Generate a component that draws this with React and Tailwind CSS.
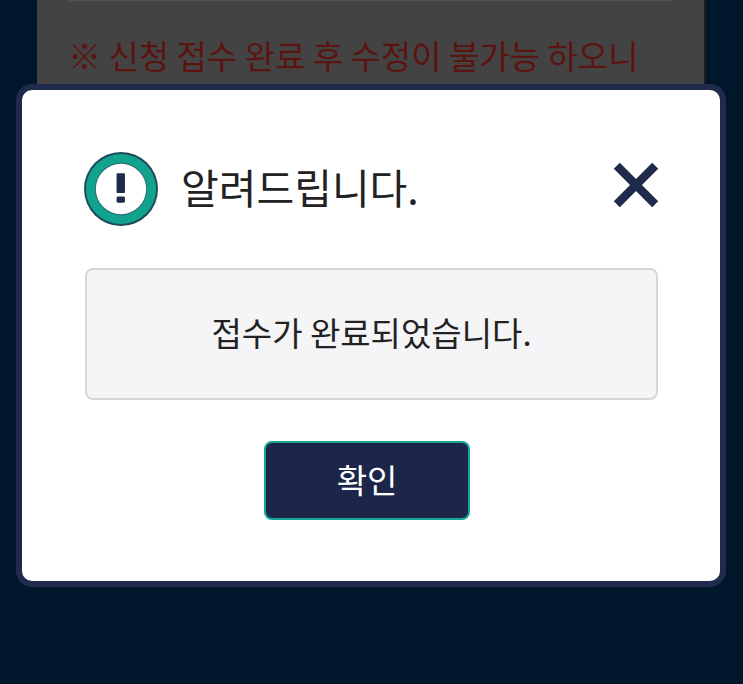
export default function App() {
  return (
    <div className="relative w-[743px] h-[684px] overflow-hidden bg-[#00162b] font-['Noto_Sans_CJK_KR','Noto_Sans',sans-serif]">
      {/* Dimmed page behind the dialog */}
      <div className="mx-[37px] w-[669px] h-[96px] bg-[#434343] border-r-2 border-r-[#1c1c1c] pl-[32px] pr-[31px]">
        <div className="h-[1px] bg-[#555555]" />
        <p className="mt-[32px] -ml-[1px] text-[33px] leading-[44px] whitespace-nowrap text-[#5c1410]">
          ※ 신청 접수 완료 후 수정이 불가능 하오니
        </p>
      </div>

      {/* Dialog */}
      <div className="absolute left-[16px] top-[84px] w-[710px] h-[503px] bg-white border-[6px] border-[#1f2a4d] rounded-[16px] pl-[63px] pr-[62px]">
        <div className="flex items-center mt-[62px] h-[75px]">
          <svg width="74" height="74" viewBox="0 0 75 75" className="shrink-0 -ml-[1px] mb-[1px]">
            <circle cx="37.5" cy="37.5" r="37.5" fill="#1f4a5a" />
            <circle cx="37.5" cy="37.5" r="35.5" fill="#12a38f" />
            <circle cx="37.5" cy="37.5" r="26.5" fill="#2a6a70" />
            <circle cx="37.5" cy="37.5" r="25.5" fill="#ffffff" />
            <rect x="33" y="21.5" width="8.5" height="20" rx="1" fill="#1f2a4d" />
            <rect x="33" y="45" width="8.5" height="6.5" rx="1.5" fill="#1f2a4d" />
          </svg>
          <h2 className="ml-[23px] mb-[8px] text-[41px] leading-[50px] font-normal text-[#222222]">알려드립니다.</h2>
          <button className="ml-auto mr-[-1px] mb-[9px]">
            <svg width="46" height="46" viewBox="0 0 46 46" className="block">
              <path d="M3.8 3.8 L42.2 42.2 M42.2 3.8 L3.8 42.2" stroke="#1f2a4d" strokeWidth="8.5" />
            </svg>
          </button>
        </div>

        <div className="mt-[41px] h-[132px] flex items-center justify-center bg-[#f5f5f7] border-2 border-[#d6d6d8] rounded-[8px]">
          <p className="pb-[5px] text-[33px] leading-[40px] text-[#222222]">접수가 완료되었습니다.</p>
        </div>

        <div className="mt-[41px] flex justify-start">
          <button className="ml-[179px] w-[206px] h-[79px] pb-[4px] bg-[#1c2649] border-2 border-[#17a595] rounded-[8px] text-white text-[33px] leading-[40px]">
            확인
          </button>
        </div>
      </div>
    </div>
  );
}
